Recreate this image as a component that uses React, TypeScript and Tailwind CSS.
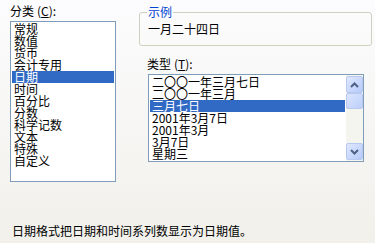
import React from "react";

const CATEGORIES = ["常规", "数值", "货币", "会计专用", "日期", "时间", "百分比", "分数", "科学记数", "文本", "特殊", "自定义"];
const TYPES = ["二〇〇一年三月七日", "二〇〇一年三月", "三月七日", "2001年3月7日", "2001年3月", "3月7日", "星期三"];

const font = { fontFamily: '"Noto Sans CJK SC", "Liberation Sans", sans-serif' };

function Row({ text, selected }: { text: string; selected?: boolean }) {
  return (
    <div
      className={`h-[12px] px-[2px] text-[12px] leading-[12px] whitespace-nowrap ${
        selected ? "bg-[#316ac5] text-white" : "text-black"
      }`}
    >
      {text}
    </div>
  );
}

function ScrollButton({ up }: { up?: boolean }) {
  return (
    <div className="flex h-[17px] w-[17px] items-center justify-center rounded-[2px] border border-[#b8c8ef] bg-gradient-to-br from-[#dfe8fe] to-[#b6cafa]">
      <svg width="9" height="6" viewBox="0 0 9 6">
        <path
          d={up ? "M1 5 L4.5 1.5 L8 5" : "M1 1 L4.5 4.5 L8 1"}
          fill="none"
          stroke="#4d6185"
          strokeWidth="2"
        />
      </svg>
    </div>
  );
}

export default function App() {
  return (
    <div
      className="flex h-[243px] w-[375px] flex-col bg-gradient-to-b from-[#fcfcfe] to-[#f1f0ea] pl-[10px] pt-[4px] text-[12px] text-black"
      style={font}
    >
      <div className="flex gap-[23px]">
        {/* Category list */}
        <div className="flex w-[106px] flex-col">
          <div className="h-[17px] leading-[13px]">
            分类<span className="ml-[3px]">(<span className="underline">C</span>):</span>
          </div>
          <div className="h-[161px] border border-[#7f9db9] bg-white p-[1px]">
            {CATEGORIES.map((c) => (
              <Row key={c} text={c} selected={c === "日期"} />
            ))}
          </div>
        </div>

        {/* Right column */}
        <div className="flex w-[233px] flex-col">
          <div className="relative mt-[8px] h-[34px] rounded-[3px] border border-[#d0d0bf] pl-[8px] pt-[10px]">
            <div className="absolute -top-[8px] left-[7px] bg-[#fbfbfc] px-[1px] leading-[14px] text-[#0046d5]">
              示例
            </div>
            <div className="leading-[12px]">一月二十四日</div>
          </div>
          <div className="ml-[8px] mt-[11px] h-[17px] leading-[13px]">
            类型<span className="ml-[3px]">(<span className="underline">T</span>):</span>
          </div>
          <div className="ml-[9px] flex h-[88px] w-[216px] border border-[#7f9db9] bg-white">
            <div className="flex-1 p-[1px]">
              {TYPES.map((t) => (
                <Row key={t} text={t} selected={t === "三月七日"} />
              ))}
            </div>
            <div className="flex w-[17px] flex-col justify-between bg-[#f5f5f0] py-[1px]">
              <div className="flex flex-col">
                <ScrollButton up />
                <div className="h-[16px] w-[17px] rounded-[2px] border border-[#b8c8ef] bg-gradient-to-br from-[#dbe5fd] to-[#bccffb]" />
              </div>
              <ScrollButton />
            </div>
          </div>
        </div>
      </div>

      <div className="mt-[43px] ml-[2px] leading-[12px]">日期格式把日期和时间系列数显示为日期值。</div>
    </div>
  );
}
